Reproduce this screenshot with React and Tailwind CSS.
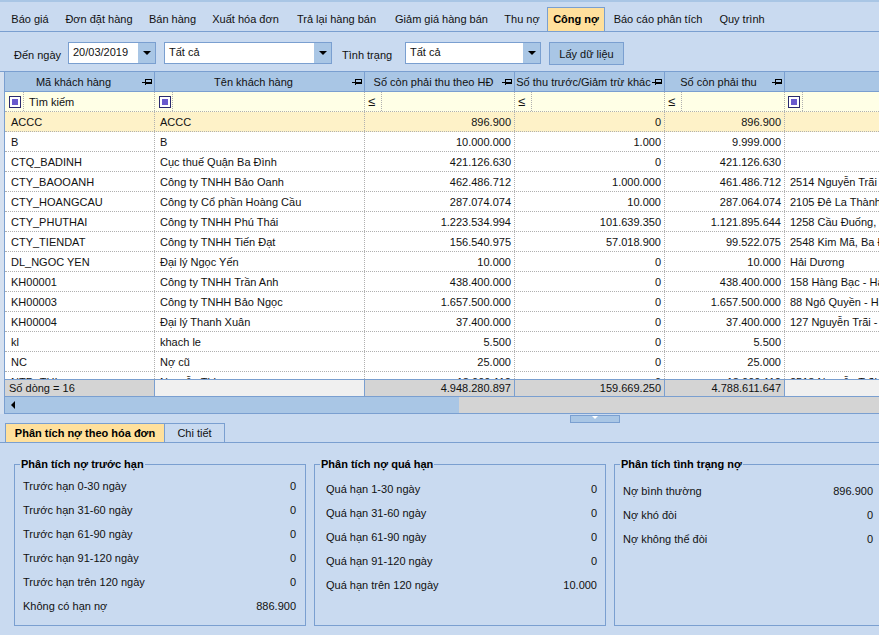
import React from "react";

const topTabs = [
  { label: "Báo giá", w: "w-[54px]" },
  { label: "Đơn đặt hàng", w: "w-[84px]" },
  { label: "Bán hàng", w: "w-[63px]" },
  { label: "Xuất hóa đơn", w: "w-[83px]" },
  { label: "Trả lại hàng bán", w: "w-[99px]" },
  { label: "Giảm giá hàng bán", w: "w-[111px]" },
  { label: "Thu nợ", w: "w-[50px]" },
  { label: "Công nợ", w: "w-[58px]", active: true },
  { label: "Báo cáo phân tích", w: "w-[106px]" },
  { label: "Quy trình", w: "w-[62px]" },
];

const rows = [
  ["ACCC", "ACCC", "896.900", "0", "896.900", ""],
  ["B", "B", "10.000.000", "1.000", "9.999.000", ""],
  ["CTQ_BADINH", "Cục thuế Quận Ba Đình", "421.126.630", "0", "421.126.630", ""],
  ["CTY_BAOOANH", "Công ty TNHH Bảo Oanh", "462.486.712", "1.000.000", "461.486.712", "2514 Nguyễn Trãi - Hà Nội"],
  ["CTY_HOANGCAU", "Công ty Cổ phần Hoàng Cầu", "287.074.074", "10.000", "287.064.074", "2105 Đê La Thành - Hà Nội"],
  ["CTY_PHUTHAI", "Công ty TNHH Phú Thái", "1.223.534.994", "101.639.350", "1.121.895.644", "1258 Cầu Đuống, Gia Lâm"],
  ["CTY_TIENDAT", "Công ty TNHH Tiến Đạt", "156.540.975", "57.018.900", "99.522.075", "2548 Kim Mã, Ba Đình"],
  ["DL_NGOC YEN", "Đại lý Ngọc Yến", "10.000", "0", "10.000", "Hải Dương"],
  ["KH00001", "Công ty TNHH Trần Anh", "438.400.000", "0", "438.400.000", "158 Hàng Bạc - Hà Nội"],
  ["KH00003", "Công ty TNHH Bảo Ngọc", "1.657.500.000", "0", "1.657.500.000", "88 Ngô Quyền - Hà Nội"],
  ["KH00004", "Đại lý Thanh Xuân", "37.400.000", "0", "37.400.000", "127 Nguyễn Trãi - Hà Nội"],
  ["kl", "khach le", "5.500", "0", "5.500", ""],
  ["NC", "Nợ cũ", "25.000", "0", "25.000", ""],
  ["NTD_THI", "Nguyễn Thị", "18.000.112", "0", "18.000.112", "2518 Nguyễn Trãi"],
];

const analysis = [
  {
    title: "Phân tích nợ trước hạn",
    box: "pl-[8px] pr-[9px] pt-[3px]",
    legend: "ml-[-3px]",
    items: [
      ["Trước hạn 0-30 ngày", "0"],
      ["Trước hạn 31-60 ngày", "0"],
      ["Trước hạn 61-90 ngày", "0"],
      ["Trước hạn 91-120 ngày", "0"],
      ["Trước hạn trên 120 ngày", "0"],
      ["Không có hạn nợ", "886.900"],
    ],
  },
  {
    title: "Phân tích nợ quá hạn",
    box: "pl-[11px] pr-[8px] pt-[6px]",
    legend: "ml-[-6px]",
    items: [
      ["Quá hạn 1-30 ngày", "0"],
      ["Quá hạn 31-60 ngày", "0"],
      ["Quá hạn 61-90 ngày", "0"],
      ["Quá hạn 91-120 ngày", "0"],
      ["Quá hạn trên 120 ngày", "10.000"],
    ],
  },
  {
    title: "Phân tích tình trạng nợ",
    box: "pl-[8px] pr-[32px] pt-[8px]",
    legend: "ml-[-3px]",
    items: [
      ["Nợ bình thường", "896.900"],
      ["Nợ khó đòi", "0"],
      ["Nợ không thể đòi", "0"],
    ],
  },
];

const FilterCheck = () => (
  <span className="w-[12px] h-[12px] border border-[#2a2a6e] bg-white flex items-center justify-center shrink-0">
    <span className="w-[6px] h-[6px] bg-[#6a5acd]" />
  </span>
);

const Pin = () => (
  <svg width="10" height="8" viewBox="0 0 10 8" className="shrink-0 mr-[1px]">
    <path d="M0 4H3M3 1V7M3 1.5H9V5.5H3M3 4.5H9" fill="none" stroke="#000" strokeWidth="1" shapeRendering="crispEdges" />
  </svg>
);

const Caret = () => (
  <svg width="8" height="4" viewBox="0 0 8 4">
    <path d="M0 0H8L4 4Z" fill="#000" />
  </svg>
);

const Combo = ({ value, width, arrow }) => (
  <div className={`${width} h-[22px] border border-[#7a9fd0] bg-white flex`}>
    <span className="flex-1 pl-[4px] leading-[18px] whitespace-nowrap overflow-hidden">{value}</span>
    <span className={`${arrow} bg-[#a9c6e5] flex items-center justify-center`}>
      <Caret />
    </span>
  </div>
);

const HeaderCell = ({ label, w }) => (
  <div className={`${w} shrink-0 h-full border-r border-[#7a9fd0] flex items-center pr-[1px]`}>
    <span className="flex-1 text-center whitespace-nowrap">{label}</span>
    <Pin />
  </div>
);

const LeqFilter = ({ w }) => (
  <div className={`${w} shrink-0 h-full border-r border-dotted border-[#b0b0b0] flex`}>
    <span className="w-[17px] h-full border-r border-dotted border-[#b0b0b0] pl-[3px] text-[13px] leading-[19px]">≤</span>
  </div>
);

export default function App() {
  return (
    <div
      className="w-[879px] h-[635px] overflow-hidden bg-[#c9daf0] flex flex-col text-[11px] text-[#111] leading-[20px]"
      style={{ fontFamily: '"Liberation Sans", Arial, sans-serif' }}
    >
      <div className="h-[2px] bg-[#a9c6e5] shrink-0" />

      {/* Top tabs */}
      <div className="h-[30px] shrink-0 flex items-end pl-[3px] border-b border-[#7a9fd0]">
        {topTabs.map((t) => (
          <div
            key={t.label}
            className={
              t.active
                ? `${t.w} h-[24px] bg-[#ffe09c] border border-b-0 border-[#7a9fd0] font-bold text-center leading-[22px] text-black`
                : `${t.w} h-[24px] text-center leading-[24px]`
            }
          >
            {t.label}
          </div>
        ))}
      </div>

      {/* Filter toolbar */}
      <div className="h-[39px] shrink-0 flex items-center pt-[3px] pl-[14px]">
        <span className="w-[54px] pt-[3px]">Đến ngày</span>
        <Combo value="20/03/2019" width="w-[88px]" arrow="w-[17px]" />
        <span className="w-[8px]" />
        <Combo value="Tất cả" width="w-[168px]" arrow="w-[17px]" />
        <span className="w-[73px] pl-[10px] pt-[3px]">Tình trạng</span>
        <Combo value="Tất cả" width="w-[136px]" arrow="w-[17px]" />
        <span className="w-[8px]" />
        <button className="w-[75px] h-[23px] border border-[#7a9fd0] bg-[#a9c6e5] text-center pt-[1px]">Lấy dữ liệu</button>
      </div>

      {/* Grid */}
      <div className="shrink-0 flex">
        <div className="w-[4px] shrink-0 bg-[#d6e1f0] border-t border-[#7a9fd0]" />
        <div className="flex-1 min-w-0 border-l border-[#7a9fd0] overflow-hidden">
          <div className="h-[21px] flex bg-[#a9c6e5] border-y border-[#7a9fd0]">
            <HeaderCell label="Mã khách hàng" w="w-[150px]" />
            <HeaderCell label="Tên khách hàng" w="w-[210px]" />
            <HeaderCell label="Số còn phải thu theo HĐ" w="w-[150px]" />
            <HeaderCell label="Số thu trước/Giảm trừ khác" w="w-[150px]" />
            <HeaderCell label="Số còn phải thu" w="w-[120px]" />
          </div>
          <div className="h-[20px] flex bg-[#ffffe6] border-b border-dotted border-[#b0b0b0]">
            <div className="w-[150px] shrink-0 h-full border-r border-dotted border-[#b0b0b0] flex">
              <div className="w-[19px] h-full border-r border-dotted border-[#b0b0b0] flex items-center pl-[4px]">
                <FilterCheck />
              </div>
              <span className="pl-[5px]">Tìm kiếm</span>
            </div>
            <div className="w-[210px] shrink-0 h-full border-r border-dotted border-[#b0b0b0]">
              <div className="w-[18px] h-full border-r border-dotted border-[#b0b0b0] flex items-center pl-[4px]">
                <FilterCheck />
              </div>
            </div>
            <LeqFilter w="w-[150px]" />
            <LeqFilter w="w-[150px]" />
            <LeqFilter w="w-[120px]" />
            <div className="w-[18px] h-full border-r border-dotted border-[#b0b0b0] flex items-center pl-[3px]">
              <FilterCheck />
            </div>
          </div>
          <div className="h-[267px] overflow-hidden bg-white">
            {rows.map((r, i) => (
              <div
                key={r[0]}
                className={`h-[20px] flex border-b border-dotted border-[#b0b0b0] ${i === 0 ? "bg-[#fef2c8]" : ""}`}
              >
                <div className="w-[150px] shrink-0 h-full border-r border-dotted border-[#b0b0b0] pl-[6px] whitespace-nowrap">{r[0]}</div>
                <div className="w-[210px] shrink-0 h-full border-r border-dotted border-[#b0b0b0] pl-[5px] whitespace-nowrap">{r[1]}</div>
                <div className="w-[150px] shrink-0 h-full border-r border-dotted border-[#b0b0b0] pr-[3px] text-right">{r[2]}</div>
                <div className="w-[150px] shrink-0 h-full border-r border-dotted border-[#b0b0b0] pr-[3px] text-right">{r[3]}</div>
                <div className="w-[120px] shrink-0 h-full border-r border-dotted border-[#b0b0b0] pr-[3px] text-right">{r[4]}</div>
                <div className="w-[200px] shrink-0 h-full pl-[5px] whitespace-nowrap">{r[5]}</div>
              </div>
            ))}
          </div>
          <div className="h-[18px] flex bg-[#d4d4d4] border-y border-[#7a9fd0] leading-[16px]">
            <div className="w-[150px] shrink-0 border-r border-[#7a9fd0] pl-[4px]">Số dòng = 16</div>
            <div className="w-[210px] shrink-0 border-r border-[#7a9fd0] bg-[#f0f0f0]" />
            <div className="w-[150px] shrink-0 border-r border-[#7a9fd0] pr-[3px] text-right">4.948.280.897</div>
            <div className="w-[150px] shrink-0 border-r border-[#7a9fd0] pr-[3px] text-right">159.669.250</div>
            <div className="w-[120px] shrink-0 border-r border-[#7a9fd0] pr-[3px] text-right">4.788.611.647</div>
            <div className="flex-1 bg-[#f0f0f0]" />
          </div>
          <div className="h-[17px] flex bg-[#d4d4d4] border-b border-[#7a9fd0]">
            <div className="w-[454px] bg-[#a9c6e5] flex items-center pl-[6px]">
              <svg width="4" height="8" viewBox="0 0 4 8">
                <path d="M4 0V8L0 4Z" fill="#000" />
              </svg>
            </div>
          </div>
        </div>
      </div>

      {/* Splitter */}
      <div className="h-[9px] shrink-0 pt-[1px] pl-[570px]">
        <div className="w-[50px] h-[8px] bg-[#a9c6e5] border border-[#7a9fd0] flex justify-center">
          <svg width="6" height="3" viewBox="0 0 6 3">
            <path d="M0 0H6L3 3Z" fill="#fff" />
          </svg>
        </div>
      </div>

      {/* Lower tabs */}
      <div className="h-[20px] shrink-0 flex pl-[5px] border-b border-[#7a9fd0]">
        <div className="w-[160px] h-[19px] bg-[#ffe09c] border-l border-r border-t border-[#7a9fd0] font-bold text-center leading-[19px] text-black">
          Phân tích nợ theo hóa đơn
        </div>
        <div className="w-[60px] h-[19px] border-r border-t border-[#7a9fd0] text-center leading-[19px]">Chi tiết</div>
      </div>

      {/* Analysis panels */}
      <div className="flex gap-[8px] pl-[14px] pt-[14px]">
        {analysis.map((p) => (
          <fieldset key={p.title} className={`${p.box} w-[292px] shrink-0 h-[169px] border border-[#7a9fd0]`}>
            <legend className={`${p.legend} px-[1px] font-bold text-black leading-[14px]`}>{p.title}</legend>
            {p.items.map(([label, value]) => (
              <div key={label} className="h-[24px] flex items-center justify-between">
                <span>{label}</span>
                <span>{value}</span>
              </div>
            ))}
          </fieldset>
        ))}
      </div>
    </div>
  );
}
